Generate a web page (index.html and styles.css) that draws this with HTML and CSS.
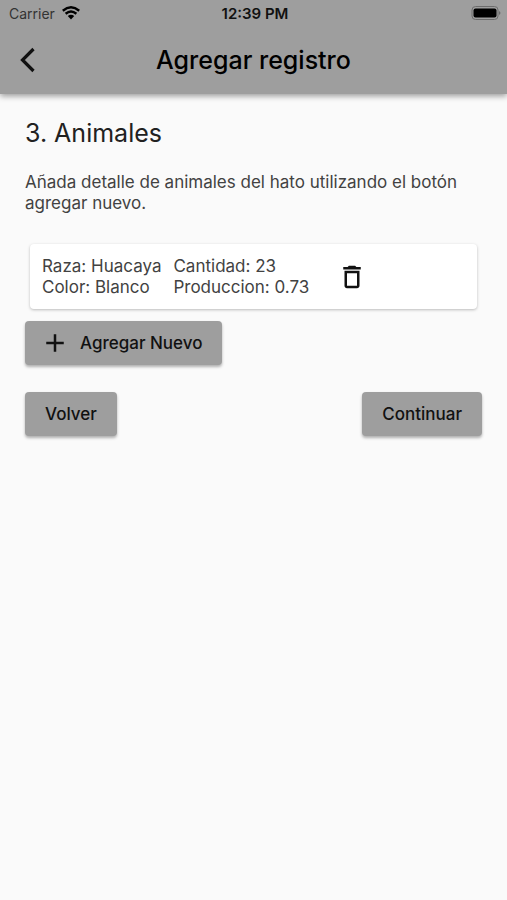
FILE: index.html
```html
<!DOCTYPE html>
<html lang="es">
<head>
<meta charset="utf-8">
<meta name="viewport" content="width=device-width, initial-scale=1">
<title>Agregar registro</title>
<link rel="stylesheet" href="styles.css">
</head>
<body>
<header class="top">
  <div class="status">
    <div class="carrier"><span>Carrier</span>
      <svg class="wifi" viewBox="0 0 18 14" aria-hidden="true"><path d="M.8 4.700Q9-2 17.200 4.700M3.600 7.700Q9 3.300 14.400 7.700" fill="none" stroke="currentColor" stroke-width="2.400"/><path d="M5.800 10Q9 7.400 12.200 10L9 13.400Z" fill="currentColor"/></svg>
    </div>
    <time class="clock">12:39 PM</time>
    <svg class="battery" viewBox="0 0 30 14" aria-hidden="true"><rect x="1" y="0.500" width="26" height="13" rx="3.500" fill="none" stroke="#6c6c6c"/><rect x="2.500" y="2.500" width="23" height="9" rx="2" fill="#000"/><path d="M28 5q3 2 0 4z" fill="#6c6c6c"/></svg>
  </div>
  <div class="bar">
    <button class="back" type="button" aria-label="Atrás"><svg viewBox="0 0 32 32" aria-hidden="true"><path d="M21.500 5 10.500 16 21.500 27" fill="none" stroke="currentColor" stroke-width="3.200"/></svg></button>
    <h1 class="title">Agregar registro</h1>
  </div>
</header>
<main class="content">
  <h2 class="heading">3. Animales</h2>
  <p class="intro">Añada detalle de animales del hato utilizando el botón agregar nuevo.</p>
  <article class="card">
    <div>Raza: Huacaya<br>Color: Blanco</div>
    <div>Cantidad: 23<br>Produccion: 0.73</div>
    <button class="delete" type="button" aria-label="Eliminar"><svg viewBox="0 0 24 24" aria-hidden="true"><path fill="currentColor" d="M6 19c0 1.100.9 2 2 2h8c1.100 0 2-.9 2-2V7H6v12zM8 9h8v10H8V9zm7.500-5-1-1h-5l-1 1H5v2h14V4z"/></svg></button>
  </article>
  <button class="button add" type="button"><svg viewBox="0 0 24 24" aria-hidden="true"><path fill="currentColor" d="M19 13h-6v6h-2v-6H5v-2h6V5h2v6h6v2z"/></svg>Agregar Nuevo</button>
  <nav class="actions">
    <button class="button" type="button">Volver</button>
    <button class="button" type="button">Continuar</button>
  </nav>
</main>
</body>
</html>
```

FILE: styles.css
```css
* { box-sizing: border-box; }
body { margin: 0; min-height: 100vh; background: #fafafa; color: #212121; font-family: Inter, sans-serif; }
button { border: 0; padding: 0; font: inherit; color: #111; cursor: pointer; }
svg { display: block; }
.top { background: #9e9e9e; color: #111; box-shadow: 0 2px 6px rgba(0, 0, 0, .4); }
.status { display: grid; grid-template-columns: 1fr auto 1fr; align-items: center; height: 26px; padding: 0 6px 0 9px; font-size: 14px; }
.carrier { display: flex; align-items: center; gap: 7px; color: #333; }
.wifi { width: 18px; height: 14px; color: #000; }
.clock { font-size: 15px; font-weight: 600; }
.battery { justify-self: end; width: 30px; height: 14px; }
.bar { display: grid; grid-template-columns: 56px 1fr 56px; align-items: center; height: 68px; }
.back { width: 56px; height: 56px; padding: 12px; background: transparent; }
.back svg { width: 32px; height: 32px; }
.title { margin: 0; text-align: center; font-size: 25px; font-weight: 450; color: #000; }
.content { padding: 24px 25px; }
.heading { margin: 0 0 24px; font-size: 25px; line-height: 30px; font-weight: 400; }
.intro { margin: 0 0 30px; font-size: 17px; line-height: 21px; color: #424242; }
.card { display: flex; align-items: center; gap: 12px; height: 65px; margin: 0 5px 12px; padding: 0 12px; border-radius: 4px; background: #fff; box-shadow: 0 1px 3px rgba(0, 0, 0, .25); font-size: 17px; line-height: 21px; color: #424242; }
.delete { margin-left: 8px; padding: 8px; background: transparent; }
.delete svg { width: 30px; height: 30px; }
.button { height: 44px; padding: 0 20px; border-radius: 4px; background: #9e9e9e; box-shadow: 0 2px 3px rgba(0, 0, 0, .3); font-size: 17px; font-weight: 500; }
.add { display: flex; align-items: center; gap: 10px; padding-left: 15px; }
.add svg { width: 30px; height: 30px; }
.actions { display: flex; justify-content: space-between; margin-top: 27px; }
```
